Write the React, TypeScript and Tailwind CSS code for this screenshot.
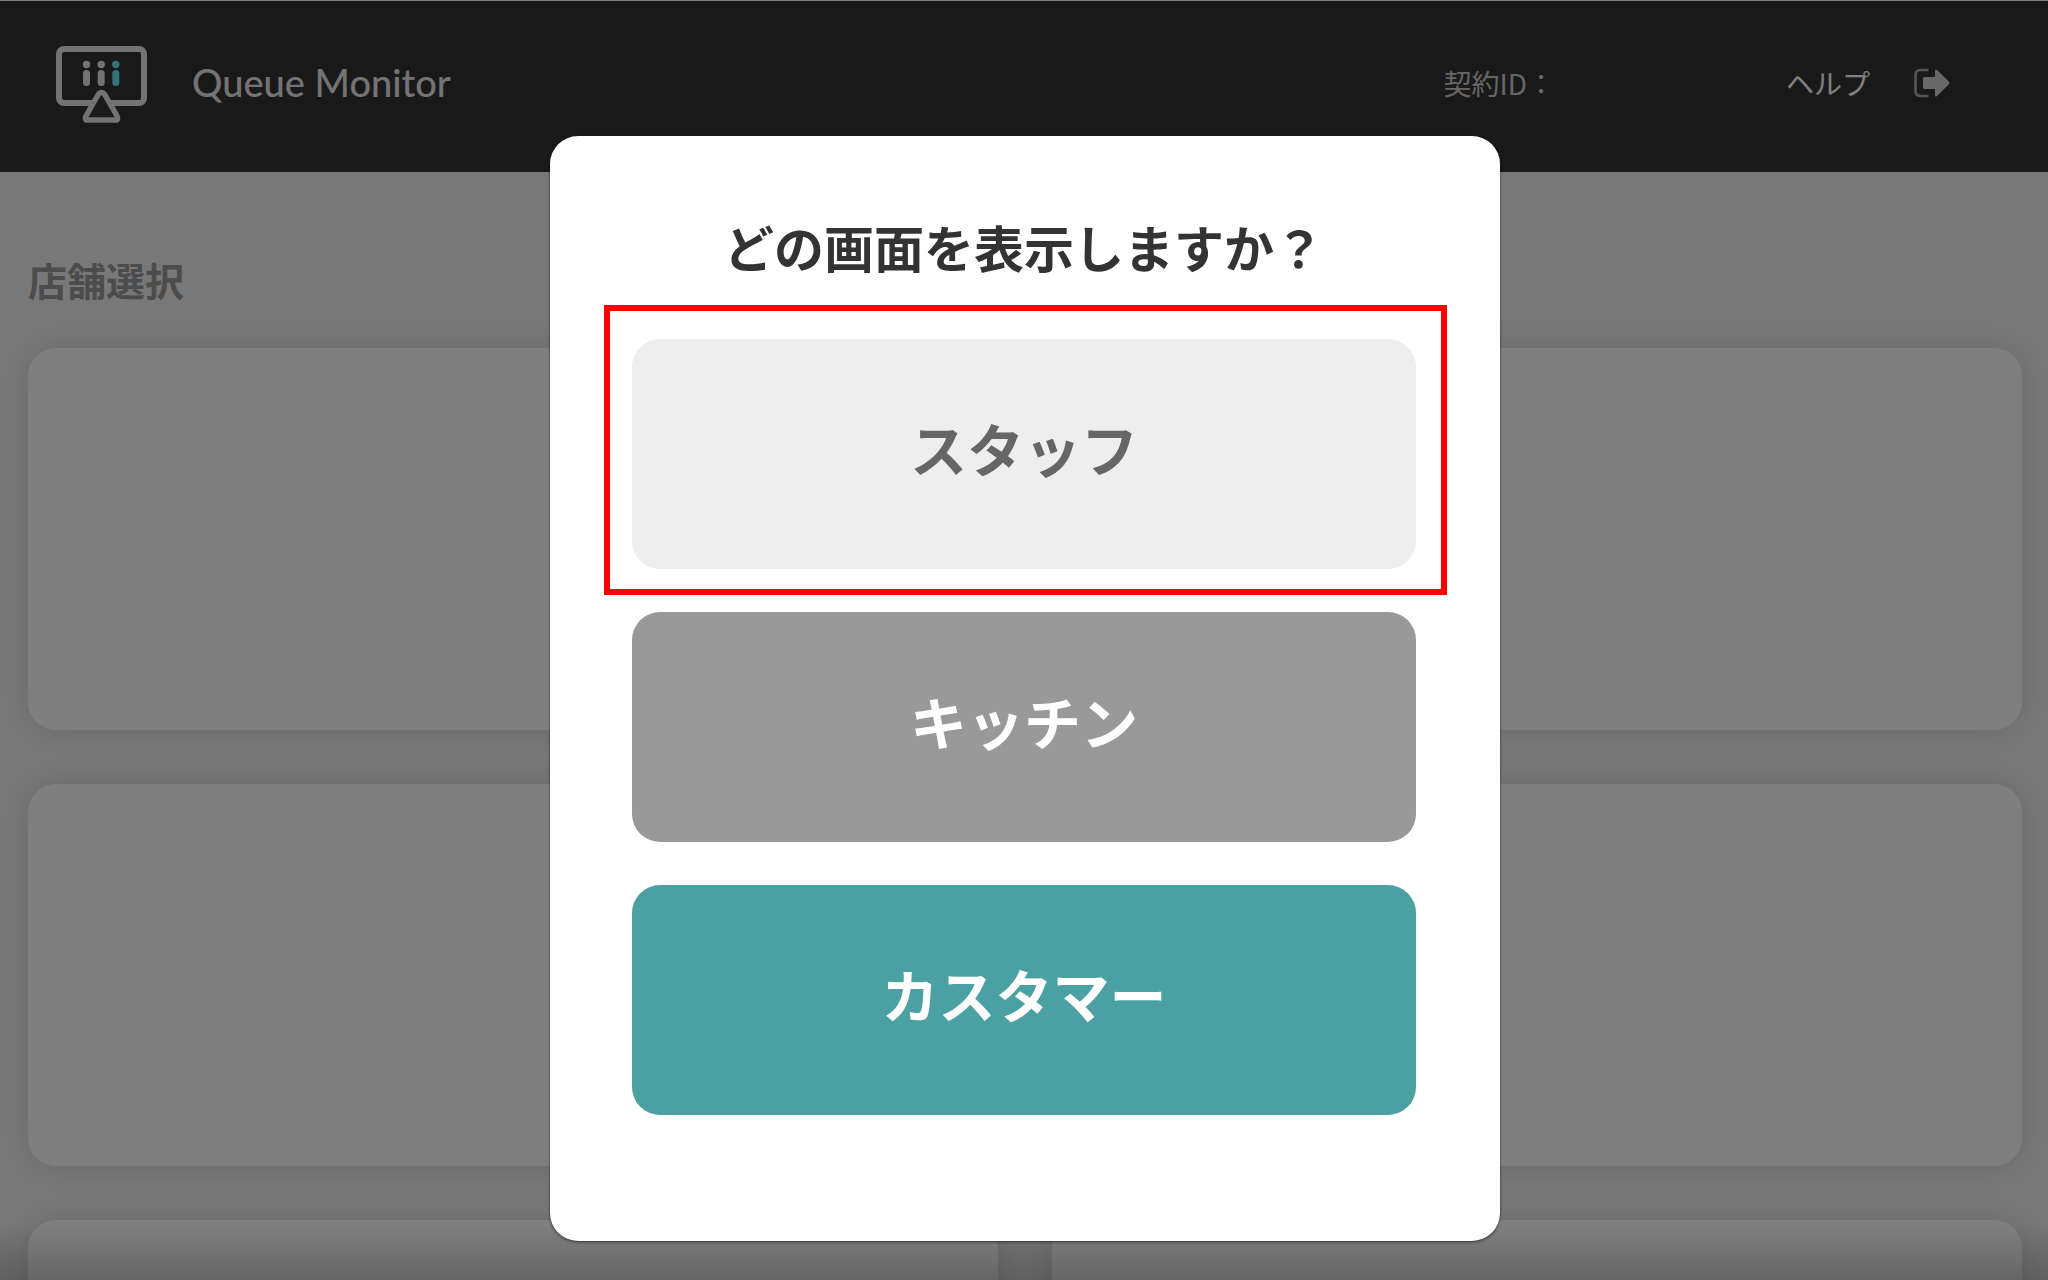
interface ScreenOption {
  label: string;
  className: string;
  highlighted?: boolean;
}

const screenOptions: ScreenOption[] = [
  { label: "スタッフ", className: "bg-[#eeeeee] text-[#666666]", highlighted: true },
  { label: "キッチン", className: "bg-[#999999] text-white" },
  { label: "カスタマー", className: "bg-[#4aa0a3] text-white" },
];

const stores = [1, 2, 3, 4, 5, 6];

function MonitorLogo() {
  return (
    <svg width="92" height="82" viewBox="0 -4 92 82" fill="none" aria-hidden="true">
      <rect x="3" y="3" width="85" height="54" rx="5" stroke="#e6e6e6" strokeWidth="6" />
      <path
        d="M30 70 L42 49 Q45.500 44 49 49 L61 70 Q62.500 74 60 74 L31 74 Q28.500 74 30 70 Z"
        fill="#333333"
        stroke="#e6e6e6"
        strokeWidth="5.500"
        strokeLinejoin="round"
      />
      <g fill="#e6e6e6">
        <circle cx="30.500" cy="18.500" r="3.700" />
        <rect x="27" y="24" width="7" height="16" rx="3.500" />
        <circle cx="45.200" cy="18.500" r="3.700" />
        <rect x="41.700" y="24" width="7" height="16" rx="3.500" />
      </g>
      <g fill="#66e8ec">
        <circle cx="59.800" cy="18.500" r="3.700" />
        <rect x="56.300" y="24" width="7" height="16" rx="3.500" />
      </g>
    </svg>
  );
}

function LogoutIcon() {
  return (
    <svg width="36" height="30" viewBox="0 0 36 30" fill="none" aria-hidden="true">
      <path
        d="M14.500 2 H7 Q1.500 2 1.500 7 V23 Q1.500 28 7 28 H14.500"
        stroke="#aaaaaa"
        strokeWidth="2.600"
      />
      <path
        d="M10.500 9 H21 V3 Q21 0.500 23 2 L35 13.800 Q36 15 35 16.200 L23 28 Q21 29.500 21 27 V21 H10.500 Q9 21 9 19.500 V10.500 Q9 9 10.500 9 Z"
        fill="#d0d0d0"
      />
    </svg>
  );
}

function Header() {
  return (
    <header className="flex items-center h-[172px] border-t border-white bg-[#333333] pl-14 pr-[98px] pb-2">
      <MonitorLogo />
      <h1 className="ml-11 font-['Lato'] text-[38px] font-medium text-[#e6e6e6]">
        Queue Monitor
      </h1>
      <p className="ml-auto text-[28px] text-[#cccccc]">契約ID：</p>
      <a href="#help" className="ml-[231px] text-[28px] text-white">
        ヘルプ
      </a>
      <button type="button" aria-label="ログアウト" className="ml-11">
        <LogoutIcon />
      </button>
    </header>
  );
}

function ScreenDialog() {
  return (
    <div className="fixed inset-0 z-10 flex items-start justify-center bg-black/50 pt-[136px] pl-0.5">
      <div
        role="dialog"
        aria-labelledby="dialog-title"
        className="w-[950px] max-w-full rounded-[28px] bg-white pl-[82px] pr-[84px] pt-[78px] pb-[126px] shadow-[0_1px_3px_rgba(0,0,0,0.6)]"
      >
        <h2
          id="dialog-title"
          className="text-center text-[50px] leading-[64px] font-bold text-[#333333]"
        >
          どの画面を表示しますか？
        </h2>
        <div className="mt-[61px] flex flex-col gap-[43px]">
          {screenOptions.map((option) => (
            <div key={option.label} className="relative">
              <button
                type="button"
                className={`block h-[230px] w-full rounded-[28px] pb-3 text-[57px] font-bold ${option.className}`}
              >
                {option.label}
              </button>
              {option.highlighted && (
                <div className="pointer-events-none absolute -top-[34px] -right-[31px] -bottom-[26px] -left-[28px] border-6 border-[#ff0000]" />
              )}
            </div>
          ))}
        </div>
      </div>
    </div>
  );
}

export default function App() {
  return (
    <div className="relative h-screen overflow-hidden bg-[#f0f0f0] font-['Noto_Sans_CJK_JP',sans-serif]">
      <Header />
      <main className="pl-7 pr-[26px] pt-[77px]">
        <h2 className="text-[39px] leading-[60px] font-bold text-[#999999]">店舗選択</h2>
        <div className="mt-[39px] grid grid-cols-2 gap-[54px]">
          {stores.map((store) => (
            <div
              key={store}
              className="h-[382px] rounded-[28px] bg-white shadow-[0_0_32px_rgba(0,0,0,0.12)]"
            />
          ))}
        </div>
      </main>
      <div className="absolute inset-x-0 bottom-0 h-14 bg-linear-to-b from-transparent to-black/20" />
      <ScreenDialog />
    </div>
  );
}
